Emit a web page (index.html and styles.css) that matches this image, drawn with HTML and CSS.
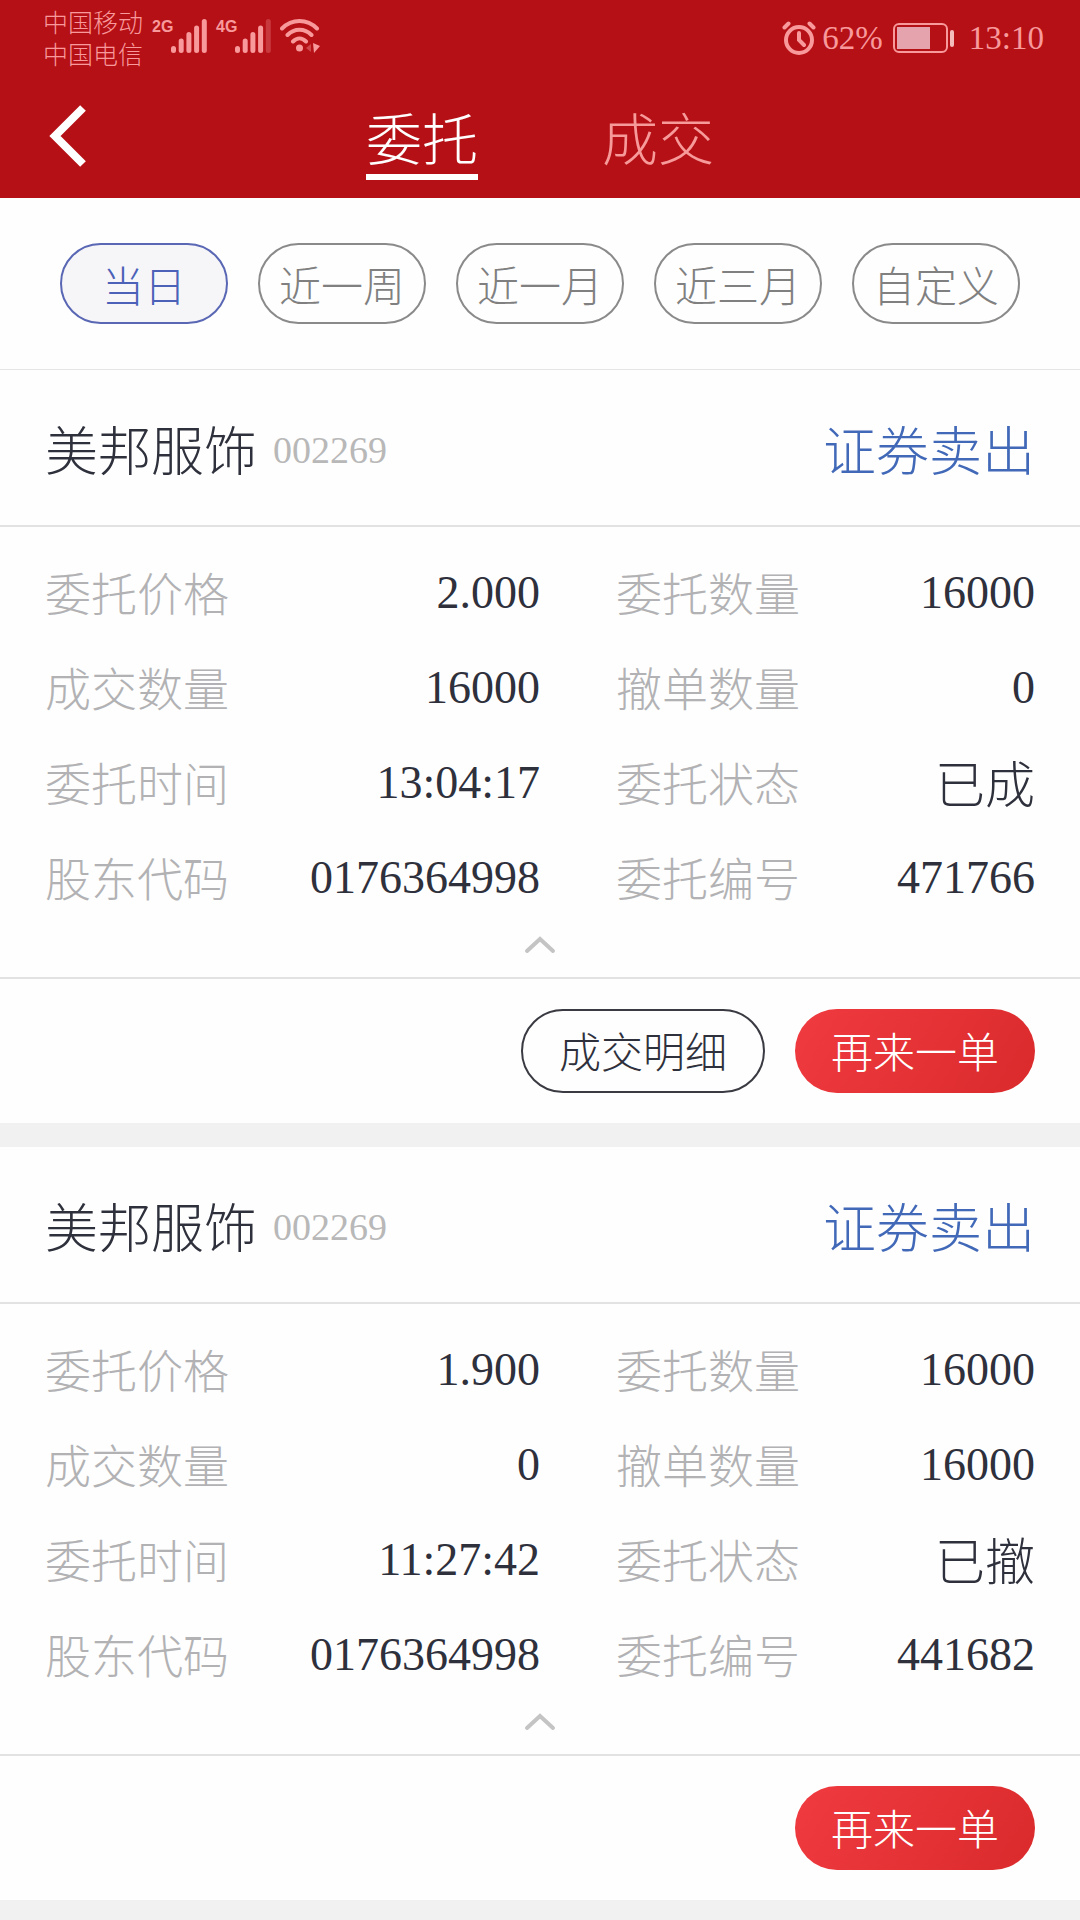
FILE: index.html
```html
<!DOCTYPE html>
<html lang="zh-CN">
<head>
<meta charset="utf-8">
<meta name="viewport" content="width=device-width, initial-scale=1">
<title>委托</title>
<link rel="stylesheet" href="styles.css">
</head>
<body>
<header class="top">
  <div class="status">
    <div class="status-left">
      <div class="carriers"><span>中国移动</span><span>中国电信</span></div>
      <div class="signal">
        <span class="net">2G</span>
        <svg width="36" height="34" viewBox="0 0 36 34" fill="none" stroke="currentColor" stroke-width="5" stroke-linecap="round" aria-hidden="true"><path d="M2.5 29.5v2M10.200 22v9.500M17.900 15.500v16M25.600 9v22.500M33.300 2.500v29"/></svg>
      </div>
      <div class="signal">
        <span class="net">4G</span>
        <svg width="36" height="34" viewBox="0 0 36 34" fill="none" stroke="currentColor" stroke-width="5" stroke-linecap="round" aria-hidden="true"><path d="M2.5 29.5v2M10.200 22v9.500M17.900 15.500v16M25.600 9v22.500"/><path d="M33.300 2.500v29" opacity=".3"/></svg>
      </div>
      <svg class="wifi" width="40" height="34" viewBox="0 0 40 34" fill="none" stroke="currentColor" stroke-width="4" stroke-linecap="round" aria-hidden="true"><path d="M2 9.500C12-.5 27-.5 37 9.500M7.500 16c7-7 17-7 24 0M13 22.500c4-4 9-4 13 0"/><circle cx="19.500" cy="29" r="3.500" fill="currentColor" stroke="none"/><path d="M33 24l7 3-6 7z" fill="currentColor" stroke="none"/><path d="M31 25l-5 4 5 4z" fill="currentColor" stroke="none" opacity=".4"/></svg>
    </div>
    <div class="status-right">
      <svg width="34" height="34" viewBox="0 0 34 34" fill="none" stroke="currentColor" stroke-width="4" stroke-linecap="round" aria-hidden="true"><circle cx="17" cy="19" r="13"/><path d="M17 12v7l5 5M2.500 6.500l4-4M31.500 6.500l-4-4"/></svg>
      <span class="percent">62%</span>
      <svg class="battery" width="62" height="30" viewBox="0 0 62 30" aria-hidden="true"><rect x="1" y="1" width="53" height="28" rx="5" fill="none" stroke="currentColor" stroke-width="2"/><rect x="4" y="4" width="33" height="22" fill="#e4a3ad"/><rect x="57" y="7" width="4" height="17" rx="2" fill="#f5bcbc"/></svg>
      <span>13:10</span>
    </div>
  </div>
  <nav class="nav">
    <button class="back" type="button" aria-label="返回"><svg width="38" height="62" viewBox="0 0 38 62" fill="none" stroke="#fff" stroke-width="8" aria-hidden="true"><path d="M35 3L7 31l28 28"/></svg></button>
    <div class="tabs"><a class="tab tab-on" href="#orders" aria-current="page">委托</a><a class="tab" href="#deals">成交</a></div>
  </nav>
</header>
<main id="orders">
  <div class="filters">
    <button class="filter filter-on" type="button">当日</button>
    <button class="filter" type="button">近一周</button>
    <button class="filter" type="button">近一月</button>
    <button class="filter" type="button">近三月</button>
    <button class="filter" type="button">自定义</button>
  </div>

  <article class="card">
    <div class="card-head"><h2 class="name">美邦服饰</h2><span class="code">002269</span><span class="side">证券卖出</span></div>
    <div class="card-body">
      <dl class="facts">
        <div class="fact"><dt>委托价格</dt><dd>2.000</dd></div>
        <div class="fact"><dt>委托数量</dt><dd>16000</dd></div>
        <div class="fact"><dt>成交数量</dt><dd>16000</dd></div>
        <div class="fact"><dt>撤单数量</dt><dd>0</dd></div>
        <div class="fact"><dt>委托时间</dt><dd>13:04:17</dd></div>
        <div class="fact"><dt>委托状态</dt><dd class="state">已成</dd></div>
        <div class="fact"><dt>股东代码</dt><dd>0176364998</dd></div>
        <div class="fact"><dt>委托编号</dt><dd>471766</dd></div>
      </dl>
      <button class="fold" type="button" aria-label="收起"><svg width="32" height="18" viewBox="0 0 32 18" fill="none" stroke="#c4c4c4" stroke-width="4" stroke-linecap="round" aria-hidden="true"><path d="M3 15L16 3l13 12"/></svg></button>
    </div>
    <div class="card-foot"><button class="btn btn-line" type="button">成交明细</button><button class="btn btn-red" type="button">再来一单</button></div>
  </article>

  <article class="card">
    <div class="card-head"><h2 class="name">美邦服饰</h2><span class="code">002269</span><span class="side">证券卖出</span></div>
    <div class="card-body">
      <dl class="facts">
        <div class="fact"><dt>委托价格</dt><dd>1.900</dd></div>
        <div class="fact"><dt>委托数量</dt><dd>16000</dd></div>
        <div class="fact"><dt>成交数量</dt><dd>0</dd></div>
        <div class="fact"><dt>撤单数量</dt><dd>16000</dd></div>
        <div class="fact"><dt>委托时间</dt><dd>11:27:42</dd></div>
        <div class="fact"><dt>委托状态</dt><dd class="state">已撤</dd></div>
        <div class="fact"><dt>股东代码</dt><dd>0176364998</dd></div>
        <div class="fact"><dt>委托编号</dt><dd>441682</dd></div>
      </dl>
      <button class="fold" type="button" aria-label="收起"><svg width="32" height="18" viewBox="0 0 32 18" fill="none" stroke="#c4c4c4" stroke-width="4" stroke-linecap="round" aria-hidden="true"><path d="M3 15L16 3l13 12"/></svg></button>
    </div>
    <div class="card-foot"><button class="btn btn-red" type="button">再来一单</button></div>
  </article>
</main>
</body>
</html>
```
FILE: styles.css
```css
* { box-sizing: border-box; }

body {
  margin: 0;
  background: #f2f1f2;
  color: #2e303c;
  font-family: "Liberation Serif", "Noto Sans CJK SC", serif;
  font-weight: 300;
}

button {
  padding: 0;
  border: 0;
  background: none;
  color: inherit;
  font: inherit;
  cursor: pointer;
}

svg { display: block; flex: none; }

/* header */
.top { background: #b41016; color: #f8999b; }

.status {
  display: flex;
  justify-content: space-between;
  align-items: flex-start;
  height: 75px;
  padding: 8px 36px 0 43px;
}

.status-left { display: flex; gap: 9px; }
.carriers { display: flex; flex-direction: column; font-size: 25px; line-height: 32px; }
.signal { display: flex; padding-top: 11px; }
.net {
  width: 19px;
  font: bold 16px/16px "Liberation Sans Narrow", "Liberation Sans", sans-serif;
}
.wifi { margin-top: 11px; }

.status-right {
  display: flex;
  align-items: center;
  padding-top: 12px;
  font-size: 33px;
  line-height: 36px;
}
.percent { margin: 0 10px 0 6px; }
.battery { margin-right: 14px; }

.nav {
  display: grid;
  grid-template-columns: 1fr auto 1fr;
  align-items: start;
  padding: 30px 48px 18px;
}
.back { justify-self: start; }
.tabs { display: flex; gap: 124px; }
.tab {
  padding-top: 4px;
  border-bottom: 6px solid transparent;
  color: #f79a9a;
  font-size: 56px;
  line-height: 65px;
  text-decoration: none;
}
.tab-on { border-color: #fff; color: #fff; }

/* period filter */
.filters {
  display: flex;
  gap: 30px;
  padding: 45px 60px;
  border-bottom: 1px solid #e6e4e6;
  background: #fefefe;
}
.filter {
  flex: 1;
  height: 81px;
  padding-top: 8px;
  border: 2px solid #8a8a8a;
  border-radius: 41px;
  color: #808080;
  font-size: 42px;
  line-height: 60px;
}
.filter-on { border-color: #5967b4; background: #f6f5f8; color: #4b62b8; }

/* order card */
.card { margin-bottom: 24px; background: #fefefe; }

.card-head {
  display: flex;
  align-items: center;
  height: 157px;
  padding: 4px 45px 0;
  border-bottom: 2px solid #e2e2e2;
  line-height: 60px;
}
.name { margin: 0 16px 0 0; font-size: 53px; font-weight: inherit; }
.code { color: #b8b8b8; font-size: 38px; }
.side { margin-left: auto; color: #4169b8; font-size: 53px; }
.name, .side { padding-top: 6px; }

.card-body { padding: 18px 0 23px; border-bottom: 2px solid #e2e2e2; }
.facts { display: grid; grid-template-columns: 1fr 1fr; margin: 0; }
.fact {
  display: flex;
  justify-content: space-between;
  align-items: center;
  height: 95px;
  padding-left: 45px;
  font-size: 46px;
  line-height: 60px;
}
.fact:nth-child(even) { padding: 0 45px 0 76px; }
.fact dt { padding-top: 6px; color: #b2b2b4; }
.fact dd { margin: 0; }
.fact .state { padding-top: 6px; font-size: 50px; }

.fold { display: block; margin: 11px auto 0; }

.card-foot { display: flex; justify-content: flex-end; gap: 30px; padding: 30px 45px; }
.btn {
  height: 84px;
  padding: 6px 36px 0;
  border-radius: 42px;
  font-size: 42px;
  line-height: 60px;
}
.btn-line { border: 2px solid #3a3b42; }
.btn-red { background: linear-gradient(120deg, #f03b40, #da2a2c); color: #fff; }
```
